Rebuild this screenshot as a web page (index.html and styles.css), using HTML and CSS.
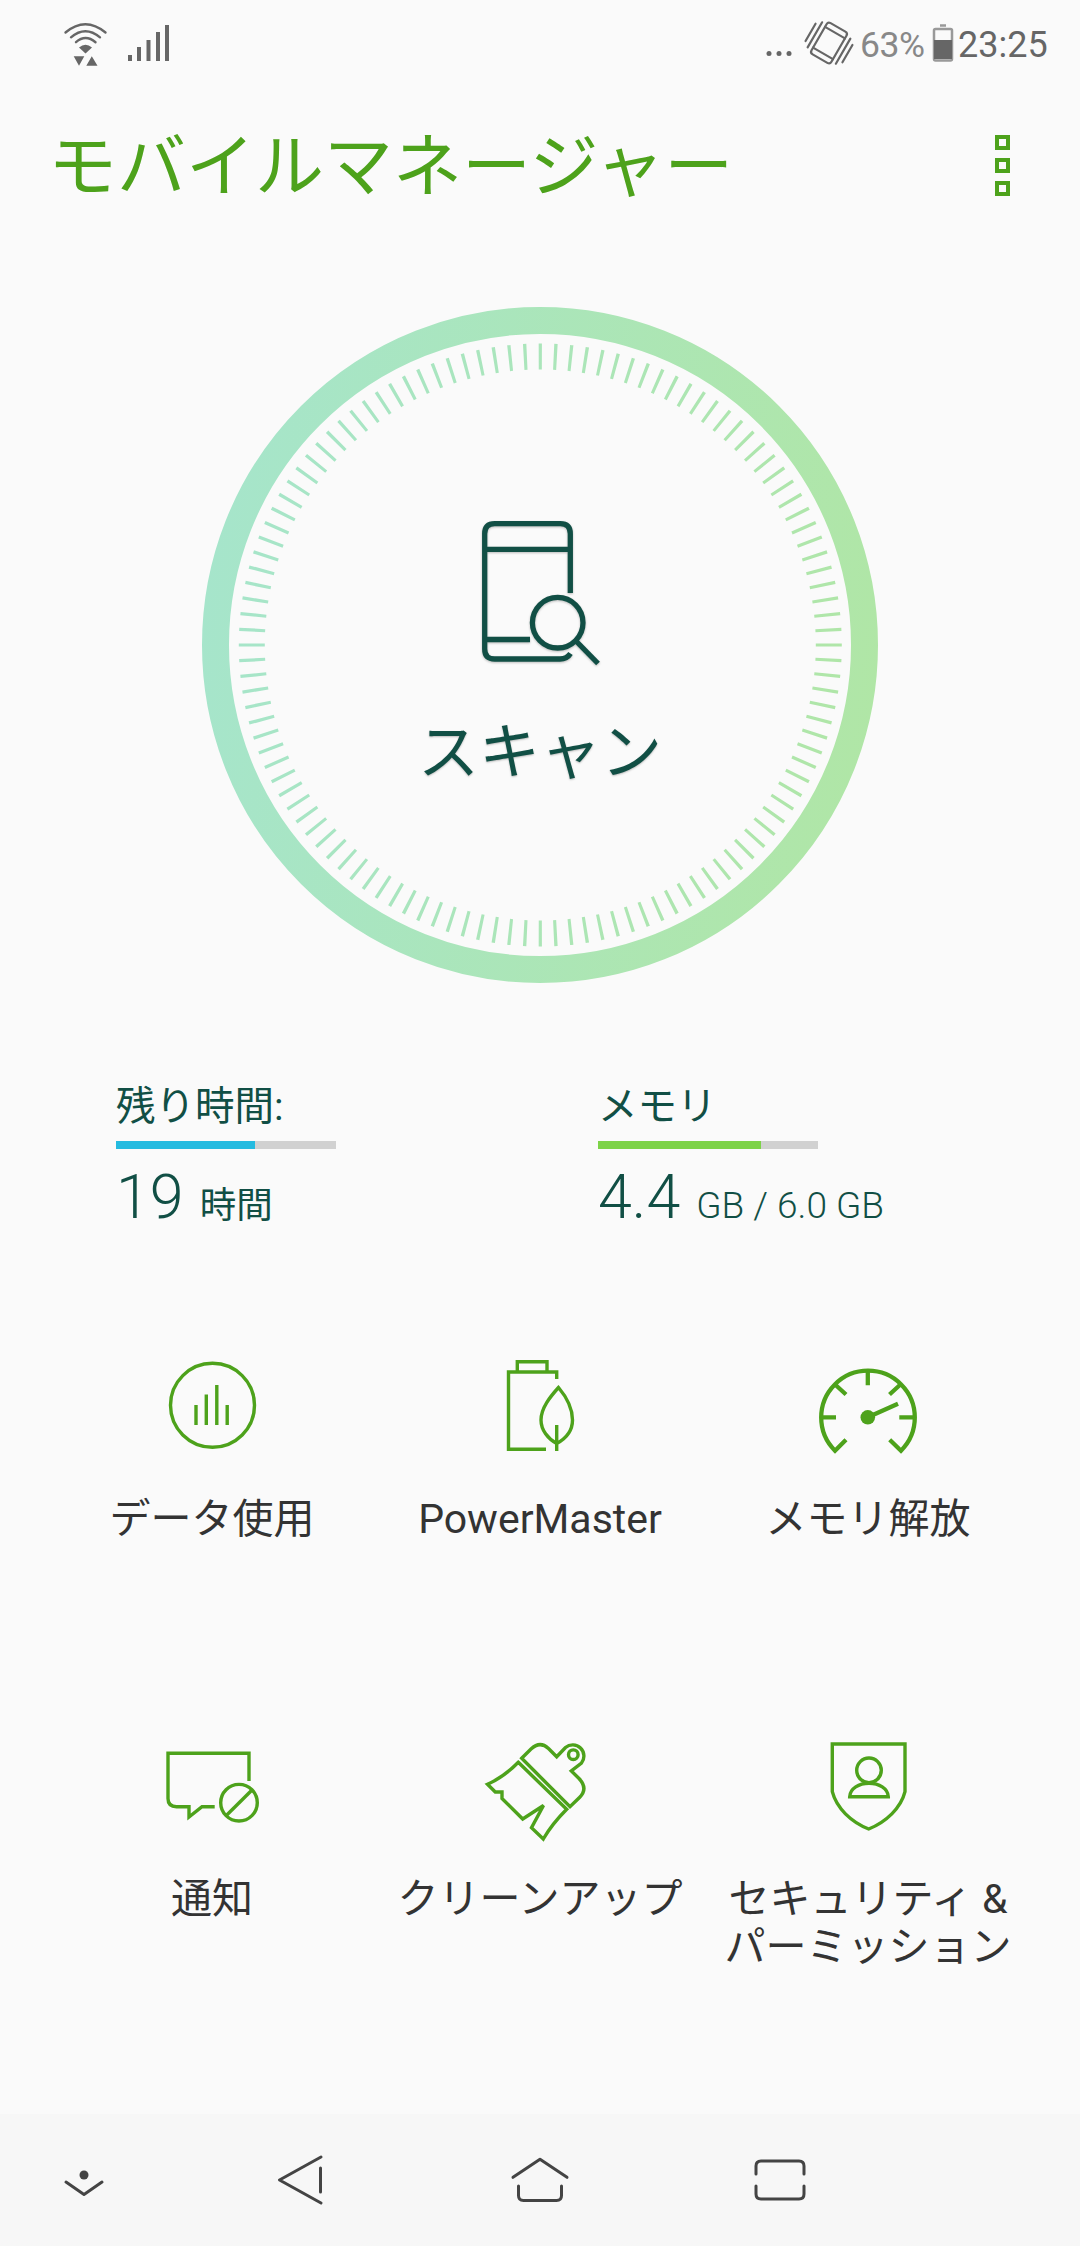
FILE: index.html
```html
<!DOCTYPE html>
<html lang="ja">
<head>
    <meta charset="UTF-8">
    <meta name="viewport" content="width=device-width, initial-scale=1.0">
    <title>モバイルマネージャー</title>
    <link rel="stylesheet" href="styles.css">
</head>
<body>
    <!-- Status bar -->
    <div class="status-bar">
        <svg class="status-left" width="120" height="60" viewBox="60 15 120 60">
            <g class="status-line">
                <path d="M65.5 32.5Q85.3 16 105.5 32.5"/>
                <path d="M71 37.3Q85.3 25 100 37.3"/>
                <path d="M76 42.2Q85.5 34 95.5 42.2"/>
            </g>
            <g class="status-solid">
                <path d="M79 47.5Q85.5 42 92 47.5L85.5 53.5Z"/>
                <path d="M73.7 56.3H84.3L79 65.8ZM86.3 65.8H97.5L91.8 56.3Z"/>
                <path d="M128 55h4v6h-4zM137 47h4v14h-4zM146.5 40h4v21h-4zM156 32h4v29h-4zM165 25h4v36h-4z"/>
            </g>
        </svg>
        <svg class="status-right" width="94" height="60" viewBox="762 15 94 60">
            <g class="status-solid">
                <circle cx="768" cy="53.5" r="2.5"/>
                <circle cx="778" cy="53.5" r="2.5"/>
                <circle cx="788" cy="53.5" r="2.5"/>
            </g>
            <g class="status-line thin" transform="translate(828 43) rotate(30)">
                <rect x="-11.5" y="-18" width="23" height="36" rx="3"/>
                <path d="M-11.5 -12H11.5M-11.5 12H11.5M-16.3 -14.5V14.5M16.3 -14.5V14.5M-21.3 -10V10M21.3 -10V10"/>
            </g>
        </svg>
        <span class="battery-text">63%</span>
        <svg class="battery" width="22" height="40" viewBox="0 0 22 40">
            <path class="battery-shell" d="M8 2.5H14M3.5 6H18.5Q20 6 20 7.5V36Q20 37.5 18.5 37.5H3.5Q2 37.5 2 36V7.5Q2 6 3.5 6Z"/>
            <path class="status-solid" d="M2 17H20V36H2Z"/>
        </svg>
        <span class="clock">23:25</span>
    </div>

    <!-- Title -->
    <header class="header">
        <h1>モバイルマネージャー</h1>
        <button class="menu-button" aria-label="メニュー">
            <span></span>
            <span></span>
            <span></span>
        </button>
    </header>

    <!-- Scan button -->
    <main>
        <button class="scan">
            <svg class="scan-ring" width="676" height="676" viewBox="0 0 676 676">
                <defs>
                    <linearGradient id="ring" gradientUnits="userSpaceOnUse" x1="0" y1="300" x2="676" y2="376">
                        <stop offset="0" stop-color="#a6e5cb"/>
                        <stop offset="1" stop-color="#b0e6a6"/>
                    </linearGradient>
                </defs>
                <circle class="ring" cx="338" cy="338" r="324.5"/>
                <circle class="ticks" cx="338.3" cy="338" r="288.5" pathLength="360"/>
            </svg>
            <svg class="scan-icon" width="124" height="150" viewBox="478 517 124 150">
                <path d="M570.3 593V533.7Q570.3 523.7 560.3 523.7H494.7Q484.7 523.7 484.7 533.7V649Q484.7 659 494.7 659H560Q567 659 570.5 653.5M484.7 549.3H570.3M484.7 639.5H530"/>
                <circle cx="557.7" cy="622.7" r="25.3"/>
                <path d="M576 641L598 663.5"/>
            </svg>
            <span class="scan-label">スキャン</span>
        </button>

        <!-- Battery and memory -->
        <section class="stats">
            <div class="stat">
                <h2>残り時間:</h2>
                <div class="bar"><div class="bar-fill time" style="width: 63%"></div></div>
                <p><span class="big">19</span><span class="unit hours">時間</span></p>
            </div>
            <div class="stat">
                <h2>メモリ</h2>
                <div class="bar"><div class="bar-fill memory" style="width: 74%"></div></div>
                <p><span class="big">4.4</span><span class="unit">GB / 6.0 GB</span></p>
            </div>
        </section>

        <!-- Tools -->
        <section class="tools">
            <a class="tool">
                <svg viewBox="0 0 100 100">
                    <circle cx="50.5" cy="50.3" r="42"/>
                    <path d="M34 70V50M44.3 70V39.5M54.8 70V30M65.2 70V50"/>
                </svg>
                <span>データ使用</span>
            </a>
            <a class="tool">
                <svg viewBox="0 0 100 100">
                    <path d="M66.7 24V17H18.5V94.3H56M27.3 17V6.7H57V17"/>
                    <path d="M68.5 32.5C60 42 51 53 51 65C51 75 58 84 66.7 88.5C75 84 82.5 76 82.5 65C82.5 53 76.5 42 68.5 32.5ZM66.7 70V96"/>
                </svg>
                <span>PowerMaster</span>
            </a>
            <a class="tool">
                <svg class="heavy" viewBox="0 0 100 100">
                    <path d="M28 84.7L17 95.7A46.8 46.8 0 1 1 83 95.7L71.7 84.7"/>
                    <path d="M49.8 15V30.3M2.5 62.3H18M97 62.3H81.3M16.5 29L28 39.5M83 29L71.5 39.5M49.8 62.3L80 48.7"/>
                    <circle class="dot" cx="49.8" cy="62.3" r="7.3"/>
                </svg>
                <span>メモリ解放</span>
            </a>
            <a class="tool">
                <svg viewBox="0 0 100 100">
                    <path d="M87 46V18.3H6V63.5Q6 71.7 14.5 71.7H27V82L40 71.7H52.7"/>
                    <circle cx="77" cy="67.7" r="18.3"/>
                    <path d="M64.3 80.5L90 55"/>
                </svg>
                <span>通知</span>
            </a>
            <a class="tool">
                <svg viewBox="0 0 100 100">
                    <path d="M31.7 23.3L41 14Q50 5.5 58.5 13.5L66.7 21.7L75.5 12.5A11.2 11.2 0 0 1 91.5 28L81.3 36L89 43.5Q98.5 53.5 89.5 62.5L80 71.7Z"/>
                    <circle cx="83.3" cy="19.7" r="4.8"/>
                    <path d="M28.3 27.3L76.7 74.3Q62 89 53.3 104L41.5 92.7L53.5 70.5L32.7 84L12 63.5V57H5.3L-2.5 49.3Q14 42 28.3 27.3Z"/>
                </svg>
                <span>クリーンアップ</span>
            </a>
            <a class="tool">
                <svg viewBox="0 0 100 100">
                    <path d="M14.3 9H87V56.7C83 73 68 87 50.7 94C33 87 18.5 73 14.3 56.7Z"/>
                    <circle cx="51" cy="35.3" r="12.3"/>
                    <path d="M31.7 61.8C32 53.5 41 48.3 51 48.3S70 53.5 70.3 61.8Z"/>
                </svg>
                <span>セキュリティ &amp;<br>パーミッション</span>
            </a>
        </section>
    </main>

    <!-- Navigation bar -->
    <nav class="nav-bar">
        <svg viewBox="44 2150 80 60">
            <circle class="dot" cx="84" cy="2175" r="4.5"/>
            <path d="M66 2182L84 2194.5L102 2182"/>
        </svg>
        <svg viewBox="260 2150 80 60">
            <path d="M321 2157L279.5 2180L321 2203M320.5 2168V2192"/>
        </svg>
        <svg viewBox="500 2150 80 60">
            <path d="M513 2177.3L540 2159.3L567 2177.3M518.5 2186V2195.5Q518.5 2200.5 523.5 2200.5H556.5Q561.5 2200.5 561.5 2195.5V2186"/>
        </svg>
        <svg viewBox="740 2150 80 60">
            <path d="M756 2174V2166Q756 2161 761 2161H799Q804 2161 804 2166V2174M756 2186V2194Q756 2199 761 2199H799Q804 2199 804 2194V2186"/>
        </svg>
    </nav>
</body>
</html>
```

FILE: styles.css
```css
* {
    box-sizing: border-box;
    margin: 0;
    padding: 0;
}
body {
    width: 1080px;
    height: 2246px;
    display: flex;
    flex-direction: column;
    background-color: #fafafa;
    font-family: Roboto, "Noto Sans CJK JP", sans-serif;
    color: #333;
}
button {
    background: none;
    border: none;
    font: inherit;
}
svg {
    display: block;
    overflow: visible;
    flex-shrink: 0;
}

/* Status bar */
.status-bar {
    display: flex;
    flex-shrink: 0;
    align-items: center;
    height: 90px;
    padding: 0 33px 0 60px;
    font-size: 36px;
    line-height: 60px;
    color: #666;
}
.status-left {
    margin-right: auto;
}
.status-line {
    fill: none;
    stroke: #666;
    stroke-width: 2.4;
    stroke-linecap: round;
}
.status-line.thin {
    stroke-width: 2.2;
}
.status-solid {
    fill: #666;
}
.battery-text {
    width: 75px;
    padding-left: 3px;
    font-size: 35.5px;
    color: #888;
    letter-spacing: -0.5px;
}
.battery {
    margin: 0 4px 4px 0;
}
.battery-shell {
    fill: none;
    stroke: #999;
    stroke-width: 2.5;
}
.clock {
    width: 89px;
    white-space: nowrap;
}

/* Title */
.header {
    display: flex;
    flex-shrink: 0;
    align-items: center;
    justify-content: space-between;
    height: 150px;
    padding: 0 70px 0 48px;
}
.header h1 {
    padding-top: 5px;
    font-size: 69px;
    font-weight: 400;
    line-height: 100px;
    color: #4da21b;
}
.menu-button {
    display: flex;
    flex-direction: column;
    gap: 8px;
}
.menu-button span {
    width: 15px;
    height: 15px;
    border: 4px solid #4da21b;
}

/* Scan button */
main {
    flex: 1;
    min-height: 0;
}
.scan {
    display: grid;
    grid-template-rows: 214px 150px 312px;
    justify-items: center;
    width: 676px;
    height: 676px;
    margin: 67px auto 0;
    color: #114f45;
}
.scan-ring {
    grid-row: 1 / 4;
    grid-column: 1;
}
.ring {
    fill: none;
    stroke: url(#ring);
    stroke-width: 27;
}
.ticks {
    fill: none;
    stroke: url(#ring);
    stroke-width: 26;
    stroke-dasharray: 0.64 2.36;
    stroke-dashoffset: 0.32;
}
.scan-icon {
    grid-row: 2;
    grid-column: 1;
    margin-top: -4px;
    fill: none;
    stroke: #114f45;
    stroke-width: 5.3;
    filter: drop-shadow(0 1px 1px rgba(0, 0, 0, 0.25));
}
.scan-label {
    grid-row: 3;
    grid-column: 1;
    margin-top: 32px;
    font-size: 61px;
    line-height: 100px;
    text-shadow: 0 1px 2px rgba(0, 0, 0, 0.25);
}

/* Stats */
.stats {
    display: grid;
    grid-template-columns: 482px 1fr;
    padding-left: 116px;
    margin-top: 93px;
    color: #114f45;
}
.stat h2 {
    height: 65px;
    padding-top: 1px;
    font-size: 39.5px;
    font-weight: 400;
    line-height: 60px;
}
.bar {
    width: 220px;
    height: 8px;
    background-color: #d1d1d1;
}
.bar-fill {
    height: 100%;
}
.bar-fill.time {
    background-color: #25bbe0;
}
.bar-fill.memory {
    background-color: #7dd348;
}
.stat p {
    height: 92px;
    padding-top: 2px;
    line-height: 92px;
    white-space: nowrap;
}
.big {
    margin-right: 16px;
    font-size: 61px;
    font-weight: 300;
}
.unit {
    font-size: 37px;
    font-weight: 300;
}
.unit.hours {
    font-size: 36.5px;
    font-weight: 400;
}

/* Tools */
.tools {
    display: grid;
    grid-template-columns: repeat(3, 328px);
    grid-auto-rows: 380px;
    justify-content: center;
    margin-top: 114px;
}
.tool {
    display: flex;
    flex-direction: column;
    align-items: center;
    font-size: 41px;
    line-height: 48px;
    text-align: center;
    white-space: nowrap;
}
.tool svg {
    width: 100px;
    height: 100px;
    margin-bottom: 40px;
    fill: none;
    stroke: #4da21b;
    stroke-width: 3.4;
}
.tool svg.heavy {
    stroke-width: 4.3;
}
.tool .dot {
    fill: #4da21b;
    stroke: none;
}

/* Navigation bar */
.nav-bar {
    display: grid;
    flex-shrink: 0;
    grid-template-columns: 168px 264px 216px 264px;
    align-items: center;
    justify-items: center;
    height: 132px;
    background-color: #f7f7f7;
}
.nav-bar svg {
    width: 80px;
    height: 60px;
    fill: none;
    stroke: #444;
    stroke-width: 3;
    stroke-linecap: round;
    stroke-linejoin: round;
}
.nav-bar .dot {
    fill: #444;
    stroke: none;
}
```
